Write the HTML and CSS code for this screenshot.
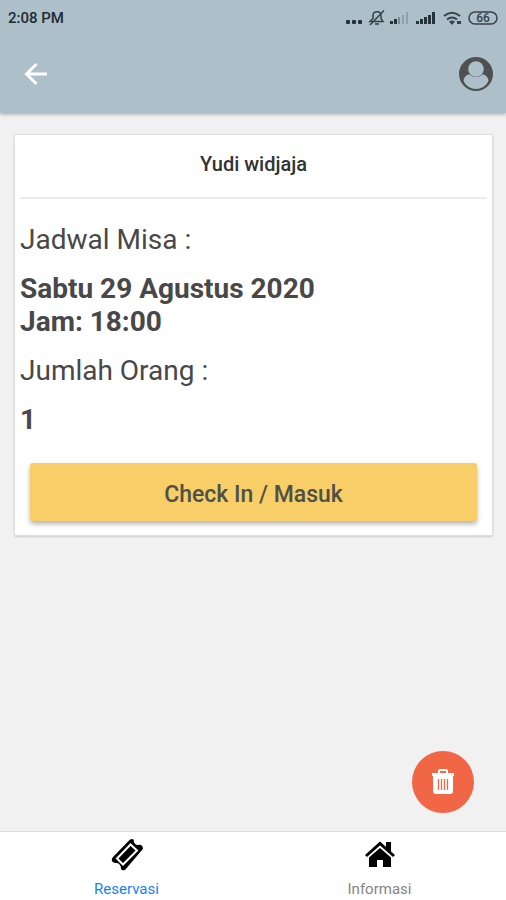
FILE: index.html
```html
<!DOCTYPE html>
<html lang="id">
<head>
<meta charset="utf-8">
<meta name="viewport" content="width=device-width, initial-scale=1">
<title>Reservasi</title>
<link rel="stylesheet" href="styles.css">
</head>
<body>
<header class="header">
  <div class="status">
    <span class="time">2:08 PM</span>
    <svg class="status-icons" width="156" height="20" viewBox="0 0 156 20" aria-hidden="true">
      <g fill="#26323a">
        <rect x="4" y="12" width="4" height="4" rx="1"/><rect x="10" y="12" width="4" height="4" rx="1"/><rect x="16" y="12" width="4" height="4" rx="1"/>
        <rect x="74" y="13" width="3" height="3"/><rect x="78" y="11" width="3" height="5"/><rect x="82" y="9" width="3" height="7"/><rect x="86" y="7" width="3" height="9"/><rect x="90" y="4" width="3" height="12"/>
        <rect x="48" y="13" width="3" height="3"/><rect x="52" y="11" width="3" height="5"/>
      </g>
      <g fill="#7d8c94"><rect x="56" y="9" width="2" height="7"/><rect x="60" y="7" width="2" height="9" opacity=".6"/><rect x="64" y="4" width="2" height="12" opacity=".6"/></g>
      <g fill="none" stroke="#35424a" stroke-width="1.5">
        <path d="M28 13.500h13l-2-3V7.500c0-5-8-5-8 0v3zM33 16h4M28 17 42 2.500"/>
        <path d="M102 8q8-6.500 16 0M105 11.500q5-4 10 0" stroke-width="2"/>
        <rect x="127" y="4" width="28" height="12" rx="6"/>
      </g>
      <path d="m107 13.500q3-2 6 0l-3 3.500zM115 13h4v3h-4z" fill="#35424a"/>
      <text class="battery" x="141" y="14" text-anchor="middle">66</text>
    </svg>
  </div>
  <div class="toolbar">
    <button class="icon-button" type="button" aria-label="Kembali">
      <svg width="36" height="36" viewBox="0 0 36 36" aria-hidden="true"><path d="M30 18H10M19.500 8 9.500 18l10 10" fill="none" stroke="#fff" stroke-width="3"/></svg>
    </button>
    <button class="icon-button" type="button" aria-label="Profil">
      <svg width="36" height="36" viewBox="0 0 36 36" aria-hidden="true"><circle cx="18" cy="18" r="17" fill="#505050"/><path d="M5.500 25c.5-4 3-6.500 6-6.500q6.500 5 13 0c3 0 5.500 2.500 6 6.500-5 10.500-20 10.500-25 0z" fill="#adbfc9"/><circle cx="18" cy="13" r="7.800" fill="#adbfc9"/></svg>
    </button>
  </div>
</header>
<main class="content">
  <section class="card">
    <h1 class="card-title">Yudi widjaja</h1>
    <dl class="details">
      <dt>Jadwal Misa :</dt>
      <dd>Sabtu 29 Agustus 2020<br>Jam: 18:00</dd>
      <dt>Jumlah Orang :</dt>
      <dd>1</dd>
    </dl>
    <button class="checkin" type="button">Check In / Masuk</button>
  </section>
  <button class="fab" type="button" aria-label="Hapus">
    <svg width="24" height="28" viewBox="0 0 24 28" aria-hidden="true"><path d="M8 5V3q0-1 1-1h6q1 0 1 1v2" fill="none" stroke="#fff" stroke-width="2"/><path d="M1 5h22v3h-1v15q0 3-3 3H5q-3 0-3-3V8H1z" fill="#fff"/><path d="M7.500 11v11M10.500 11v11M13.500 11v11M16.500 11v11" stroke="#f16745" stroke-width="1.300"/></svg>
  </button>
</main>
<nav class="tabs">
  <a class="tab active" href="#reservasi">
    <svg width="36" height="34" viewBox="0 0 36 34" aria-hidden="true"><path d="M21 1.500 24 1q1 1 1 3 1 3 4 3 3-1 4 1 2 2 0 4L16 32q-3 1-4-1 0-5-4-6-4 0-5-2-1-2 1-4z" fill="#000"/><path d="M21.500 6.500 8 20.500l6 6L28 12.500z" fill="none" stroke="#fff" stroke-width="2"/></svg>
    <span>Reservasi</span>
  </a>
  <a class="tab" href="#informasi">
    <svg width="36" height="34" viewBox="0 0 36 34" aria-hidden="true"><path d="M4 18 18 5.500 32 18" fill="none" stroke="#000" stroke-width="3"/><path d="M24 4h5v10l-5-4zM18 10l11 9.500V29h-8v-7h-6v7H7v-9.500z" fill="#000"/></svg>
    <span>Informasi</span>
  </a>
</nav>
</body>
</html>
```
FILE: styles.css
```css
* {
  box-sizing: border-box;
}

body {
  display: flex;
  flex-direction: column;
  min-height: 100vh;
  margin: 0;
  background: #f1f1f1;
  color: #484848;
  font-family: Roboto, sans-serif;
}

button {
  border: 0;
  font: inherit;
}

svg {
  display: block;
}

.header {
  padding: 8px 8px 21px;
  background: #adbfc9;
  box-shadow: 0 1px 4px rgba(0, 0, 0, 0.35);
}

.status {
  display: flex;
  align-items: center;
  justify-content: space-between;
  height: 20px;
}

.time {
  color: #202b33;
  font-size: 15px;
  font-weight: 500;
}

.battery {
  fill: #35424a;
  font-size: 12px;
  font-weight: 500;
}

.toolbar {
  display: flex;
  align-items: center;
  justify-content: space-between;
  padding: 28px 4px 0 9px;
}

.icon-button {
  padding: 0;
  background: transparent;
}

.content {
  position: relative;
  flex: 1;
  padding: 21px 13px 21px 14px;
}

.card {
  padding: 0 5px 14px;
  border: 1px solid #dcdfe0;
  border-radius: 2px;
  background: #fff;
  box-shadow: 0 1px 2px rgba(0, 0, 0, 0.15);
}

.card-title {
  margin: 0;
  padding: 17px 0 21px;
  border-bottom: 2px solid #ebebeb;
  color: #303236;
  font-size: 20px;
  font-weight: 500;
  line-height: 24px;
  text-align: center;
}

.details {
  margin: 24px 0 27px;
  font-size: 28px;
  line-height: 33px;
}

.details dt,
.details dd {
  margin: 0 0 16px;
}

.details dd {
  font-weight: 700;
}

.checkin {
  display: block;
  width: calc(100% - 20px);
  height: 58px;
  margin: 0 10px;
  padding: 4px 6px 0;
  border-radius: 3px;
  background: #f7ce68;
  box-shadow: 0 3px 5px rgba(0, 0, 0, 0.3);
  color: #50504a;
  font-size: 23px;
  font-weight: 500;
}

.fab {
  position: absolute;
  right: 32px;
  bottom: 18px;
  display: grid;
  place-items: center;
  width: 62px;
  height: 62px;
  padding: 0;
  border-radius: 50%;
  background: #f16745;
}

.tabs {
  display: flex;
  height: 69px;
  border-top: 1px solid #dedede;
  background: #fff;
}

.tab {
  display: flex;
  flex: 1;
  flex-direction: column;
  align-items: center;
  gap: 7px;
  padding-top: 6px;
  color: #858585;
  font-size: 15px;
  line-height: 20px;
  text-decoration: none;
}

.tab.active {
  color: #1683f5;
}
```
